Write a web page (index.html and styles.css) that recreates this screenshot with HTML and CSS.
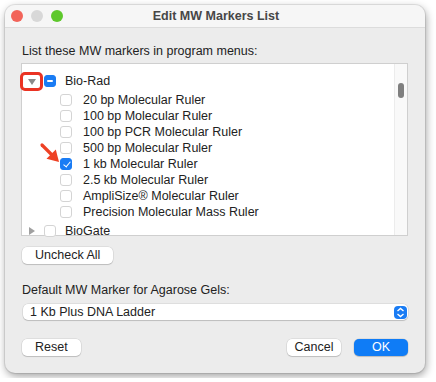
FILE: index.html
```html
<!DOCTYPE html>
<html lang="en">
<head>
    <meta charset="UTF-8">
    <title>Edit MW Markers List</title>
    <link rel="stylesheet" href="styles.css">
</head>
<body>

<div class="window">
    <div class="titlebar">
        <div class="lights">
            <span class="light red"></span>
            <span class="light grey"></span>
            <span class="light green"></span>
        </div>
        <div class="title">Edit MW Markers List</div>
    </div>

    <div class="content">
        <div class="label">List these MW markers in program menus:</div>

        <div class="listbox">
            <ul class="tree">
                <li class="group">
                    <span class="toggle open"><span class="tri down"></span></span>
                    <span class="check mixed"></span>
                    <span class="name">Bio-Rad</span>
                </li>
                <li class="item"><span class="check"></span><span class="name">20 bp Molecular Ruler</span></li>
                <li class="item"><span class="check"></span><span class="name">100 bp Molecular Ruler</span></li>
                <li class="item"><span class="check"></span><span class="name">100 bp PCR Molecular Ruler</span></li>
                <li class="item"><span class="check"></span><span class="name">500 bp Molecular Ruler</span></li>
                <li class="item"><span class="check on"></span><span class="name">1 kb Molecular Ruler</span></li>
                <li class="item"><span class="check"></span><span class="name">2.5 kb Molecular Ruler</span></li>
                <li class="item"><span class="check"></span><span class="name">AmpliSize&reg; Molecular Ruler</span></li>
                <li class="item"><span class="check"></span><span class="name">Precision Molecular Mass Ruler</span></li>
                <li class="group">
                    <span class="toggle"><span class="tri right"></span></span>
                    <span class="check"></span>
                    <span class="name">BioGate</span>
                </li>
            </ul>
            <div class="scrollbar"><span class="thumb"></span></div>

            <svg class="arrow" width="24" height="24" viewBox="0 0 24 24">
                <line x1="3" y1="3" x2="14" y2="14" stroke="#ee4124" stroke-width="3.2" stroke-linecap="round"/>
                <polygon points="20,20 7.5,16.8 16.8,7.5" fill="#ee4124"/>
            </svg>
        </div>

        <div class="row">
            <button class="btn">Uncheck All</button>
        </div>

        <div class="label second">Default MW Marker for Agarose Gels:</div>

        <div class="popup">
            <span>1 Kb Plus DNA Ladder</span>
            <span class="stepper">
                <svg width="9" height="11" viewBox="0 0 9 11">
                    <polyline points="1.5,4 4.5,1.5 7.5,4" fill="none" stroke="#fff" stroke-width="1.4"/>
                    <polyline points="1.5,7 4.5,9.5 7.5,7" fill="none" stroke="#fff" stroke-width="1.4"/>
                </svg>
            </span>
        </div>

        <div class="footer">
            <button class="btn">Reset</button>
            <div class="right">
                <button class="btn cancel">Cancel</button>
                <button class="btn primary">OK</button>
            </div>
        </div>
    </div>
</div>

</body>
</html>
```

FILE: styles.css
```css
html, body {
    margin: 0;
    padding: 0;
    background: #fff;
}

body {
    font-family: "Liberation Sans", Arial, sans-serif;
    font-size: 12px;
    color: #222;
}

ul {
    list-style: none;
    margin: 0;
    padding: 0;
}

.window {
    width: 420px;
    height: 368px;
    margin: 5px;
    border-radius: 10px;
    background: #ececec;
    box-shadow: 0 0 0 1px rgba(0, 0, 0, 0.08), 1px 3px 9px rgba(0, 0, 0, 0.38);
    overflow: hidden;
    display: flex;
    flex-direction: column;
}

.titlebar {
    height: 22px;
    background: #f6f6f6;
    border-bottom: 1px solid #dcdcdc;
    display: flex;
    align-items: center;
}

.lights {
    display: flex;
    gap: 8px;
    padding-left: 6px;
}

.light {
    width: 12px;
    height: 12px;
    border-radius: 50%;
}

.light.red { background: #f2645a; }
.light.grey { background: #d8d8d8; }
.light.green { background: #5ec82c; }

.title {
    flex: 1;
    text-align: center;
    font-weight: bold;
    font-size: 12.5px;
    color: #474747;
    margin-right: 56px;
}

.content {
    padding: 16px 17px 0 16px;
    display: flex;
    flex-direction: column;
}

.label {
    font-size: 12.5px;
    line-height: 15px;
    padding-left: 1px;
}

.label.second {
    margin-top: 19px;
}

.listbox {
    margin-top: 4px;
    height: 171px;
    background: #fff;
    border: 1px solid #cfcfcf;
    display: flex;
    position: relative;
}

.tree {
    flex: 1;
    padding-top: 6px;
}

.tree li {
    display: flex;
    align-items: center;
    height: 16px;
    font-size: 12.5px;
}

.tree li.group {
    height: 22px;
}

.tree .item {
    padding-left: 38px;
}

.toggle {
    box-sizing: border-box;
    width: 23px;
    height: 19px;
    margin-left: -2px;
    margin-right: 1px;
    display: flex;
    align-items: center;
    justify-content: center;
    border: 3px solid transparent;
    border-radius: 5px;
}

.toggle.open {
    border-color: #ea3323;
}

.tri {
    width: 0;
    height: 0;
}

.tri.down {
    border-left: 4px solid transparent;
    border-right: 4px solid transparent;
    border-top: 6px solid #8a8a8a;
    margin-top: 1px;
}

.tri.right {
    border-top: 4px solid transparent;
    border-bottom: 4px solid transparent;
    border-left: 6px solid #a0a0a0;
}

.check {
    width: 10px;
    height: 10px;
    border: 1px solid #d4d4d4;
    border-radius: 3px;
    background: #fff;
    margin-right: 11px;
    position: relative;
    flex-shrink: 0;
}

.group .check {
    margin-right: 9px;
}

.check.mixed,
.check.on {
    background: #1a7cf4;
    border-color: #1a7cf4;
}

.check.mixed::after {
    content: "";
    position: absolute;
    left: 2px;
    right: 2px;
    top: 4px;
    height: 2px;
    background: #fff;
    border-radius: 1px;
}

.check.on::after {
    content: "";
    position: absolute;
    left: 3.5px;
    top: 0.5px;
    width: 3px;
    height: 6px;
    border-right: 1.6px solid #fff;
    border-bottom: 1.6px solid #fff;
    transform: rotate(40deg);
}

.scrollbar {
    width: 12px;
    background: #f9f9f9;
    border-left: 1px solid #ececec;
    position: relative;
}

.thumb {
    position: absolute;
    left: 3px;
    top: 19px;
    width: 6px;
    height: 15px;
    border-radius: 3px;
    background: #7f7f7f;
}

.arrow {
    position: absolute;
    left: 17px;
    top: 78px;
}

.row {
    margin-top: 11px;
}

.btn {
    font-family: "Liberation Sans", Arial, sans-serif;
    font-size: 12.5px;
    color: #222;
    background: #fff;
    border: none;
    border-radius: 5px;
    box-shadow: 0 0 0 0.5px rgba(0, 0, 0, 0.12), 0 1px 1px rgba(0, 0, 0, 0.15);
    height: 17px;
    padding: 0 13px;
    line-height: 17px;
    margin-left: 1px;
}

.popup {
    margin-top: 6px;
    margin-left: 2px;
    height: 16px;
    background: #fff;
    border-radius: 5px;
    box-shadow: 0 0 0 0.5px rgba(0, 0, 0, 0.12), 0 1px 1px rgba(0, 0, 0, 0.15);
    display: flex;
    align-items: center;
    justify-content: space-between;
    padding: 0 1px 0 7px;
    font-size: 12.5px;
}

.stepper {
    width: 13px;
    height: 13px;
    background: #1a7cf4;
    border-radius: 4px;
    display: flex;
    align-items: center;
    justify-content: center;
}

.footer {
    margin-top: 19px;
    display: flex;
    justify-content: space-between;
}

.right {
    display: flex;
    gap: 12px;
}

.btn.cancel {
    width: 54px;
    padding: 0;
}

.btn.primary {
    width: 54px;
    padding: 0;
    background: #0f7cf6;
    color: #fff;
}
```
